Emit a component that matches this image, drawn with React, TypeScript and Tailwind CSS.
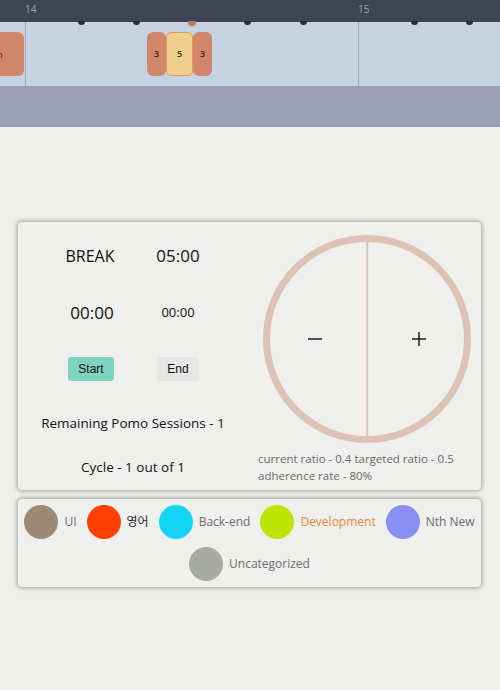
import React from 'react';

const FONT = { fontFamily: '"Open Sans", "Noto Sans CJK KR", sans-serif' };

// 10-minute tick markers along the hour ruler
const TICKS = [
  { x: 81, active: false },
  { x: 136, active: false },
  { x: 192, active: true },
  { x: 247, active: false },
  { x: 303, active: false },
  { x: 414, active: false },
  { x: 469, active: false },
];

const CATEGORIES = [
  { name: 'UI', color: '#9c8a74', text: 'text-[#6e6e6e]' },
  { name: '영어', color: '#fe4002', text: 'text-[#1f1f1f]' },
  { name: 'Back-end', color: '#14d4f5', text: 'text-[#6e6e6e]' },
  { name: 'Development', color: '#bde302', text: 'text-[#e8883a]' },
  { name: 'Nth New', color: '#8890f2', text: 'text-[#6e6e6e]' },
  { name: 'Uncategorized', color: '#a8aaa5', text: 'text-[#6e6e6e]' },
];

function Timeline() {
  return (
    <div>
      {/* hour ruler */}
      <div className="relative z-10 h-[22px] bg-[#3e4453]">
        <span className="absolute left-[25px] top-[4px] text-[10px] leading-none text-[#9aa1ad]">14</span>
        <span className="absolute left-[358px] top-[4px] text-[10px] leading-none text-[#9aa1ad]">15</span>
        {TICKS.map((t) => (
          <span
            key={t.x}
            className={`absolute rounded-b-full ${
              t.active ? 'bottom-[-4px] h-[5px] w-[8px] bg-[#c4765a]' : 'bottom-[-3px] h-[4px] w-[7px] bg-[#2a2f39]'
            }`}
            style={{ left: t.x - (t.active ? 4 : 3.5) }}
          />
        ))}
      </div>

      {/* session blocks */}
      <div className="relative h-[64px] bg-[#c5d2e1]">
        <div className="absolute left-[25px] top-0 h-full w-px bg-[#99a5b4]" />
        <div className="absolute left-[358px] top-0 h-full w-px bg-[#99a5b4]" />

        <div className="absolute left-[-20px] top-[10px] flex h-[44px] w-[44px] items-center rounded-[6px] bg-[#d2876a] pl-[17px]">
          <span className="text-[9px] leading-none text-[#3b2a22]">n</span>
        </div>

        <div className="absolute left-[147px] top-[10px] flex h-[44px] w-[19px] items-center justify-center rounded-[6px] bg-[#d2876a] text-[9px] font-semibold text-[#3b2a22]">
          3
        </div>
        <div className="absolute left-[166px] top-[10px] flex h-[44px] w-[27px] items-center justify-center rounded-[5px] border border-[#e3926a] bg-[#ecd089] text-[9px] font-semibold text-[#3b2a22]">
          5
        </div>
        <div className="absolute left-[193px] top-[10px] flex h-[44px] w-[19px] items-center justify-center rounded-[6px] bg-[#d2876a] text-[9px] font-semibold text-[#3b2a22]">
          3
        </div>
      </div>

      <div className="h-[41px] bg-[#9a9fb4]" />
    </div>
  );
}

function PomoCard() {
  return (
    <div className="ml-[18px] mt-[95px] flex h-[268px] w-[463px] rounded-[4px] bg-[#efefee] shadow-[0_0_4px_1px_rgba(0,0,0,0.35)]">
      {/* left: timer + controls */}
      <div className="flex w-[230px] flex-col">
        <div className="ml-[28px] mt-[22px] grid grid-cols-[88px_88px] text-[#111]">
          <div className="flex h-[24px] items-center justify-center text-[16px]">BREAK</div>
          <div className="flex h-[24px] items-center justify-center text-[17px]">05:00</div>
        </div>
        <div className="ml-[28px] mt-[33px] grid grid-cols-[88px_88px] text-[#111]">
          <div className="flex h-[24px] items-center justify-center pl-[4px] text-[17px]">00:00</div>
          <div className="flex h-[24px] items-center justify-center text-[13px]">00:00</div>
        </div>
        <div
          className="ml-[28px] mt-[32px] grid grid-cols-[88px_88px]"
          style={{ fontFamily: '"Liberation Sans", Arial, sans-serif' }}
        >
          <div className="flex justify-center pl-[2px]">
            <button className="h-[24px] w-[46px] rounded-[3px] bg-[#7ed4c0] text-[12px] text-[#111]">Start</button>
          </div>
          <div className="flex justify-center">
            <button className="h-[24px] w-[42px] rounded-[2px] bg-[#e6e6e4] text-[12px] text-[#111]">End</button>
          </div>
        </div>
        <div className="mt-[32px] flex h-[20px] items-center justify-center text-[13.5px] text-[#111]">
          Remaining Pomo Sessions - 1
        </div>
        <div className="mt-[24px] flex h-[20px] items-center justify-center text-[13.5px] text-[#111]">
          Cycle - 1 out of 1
        </div>
      </div>

      {/* right: ratio dial */}
      <div className="flex flex-1 flex-col">
        <div className="relative ml-[15px] mt-[13px] h-[208px] w-[208px] rounded-full border-[7px] border-[#dcc3b6]">
          <div className="absolute bottom-0 left-1/2 top-0 w-[1.5px] -translate-x-1/2 bg-[#dcc3b6]" />
          <svg className="absolute left-[38px] top-[90px]" width="14" height="14" viewBox="0 0 14 14">
            <line x1="0" y1="7" x2="14" y2="7" stroke="#111" strokeWidth="1.4" />
          </svg>
          <svg className="absolute left-[142px] top-[90px]" width="14" height="14" viewBox="0 0 14 14">
            <line x1="0" y1="7" x2="14" y2="7" stroke="#111" strokeWidth="1.4" />
            <line x1="7" y1="0" x2="7" y2="14" stroke="#111" strokeWidth="1.4" />
          </svg>
        </div>
        <div className="ml-[10px] mt-[7px] text-[11.5px] leading-[17px] text-[#6b6b6b]">
          <div>current ratio - 0.4 targeted ratio - 0.5</div>
          <div>adherence rate - 80%</div>
        </div>
      </div>
    </div>
  );
}

function CategoryLegend() {
  return (
    <div className="ml-[18px] mt-[9px] flex h-[88px] w-[463px] flex-wrap content-start justify-center gap-x-[10px] gap-y-[8px] rounded-[4px] bg-[#efefee] px-[4px] py-[6px] shadow-[0_0_4px_1px_rgba(0,0,0,0.35)]">
      {CATEGORIES.map((c) => (
        <div key={c.name} className="flex items-center gap-[6px]">
          <span className="h-[34px] w-[34px] rounded-full" style={{ backgroundColor: c.color }} />
          <span className={`text-[12px] ${c.text}`}>{c.name}</span>
        </div>
      ))}
    </div>
  );
}

export default function App() {
  return (
    <div className="h-[690px] w-[500px] overflow-hidden bg-[#efefed]" style={FONT}>
      <Timeline />
      <PomoCard />
      <CategoryLegend />
    </div>
  );
}
